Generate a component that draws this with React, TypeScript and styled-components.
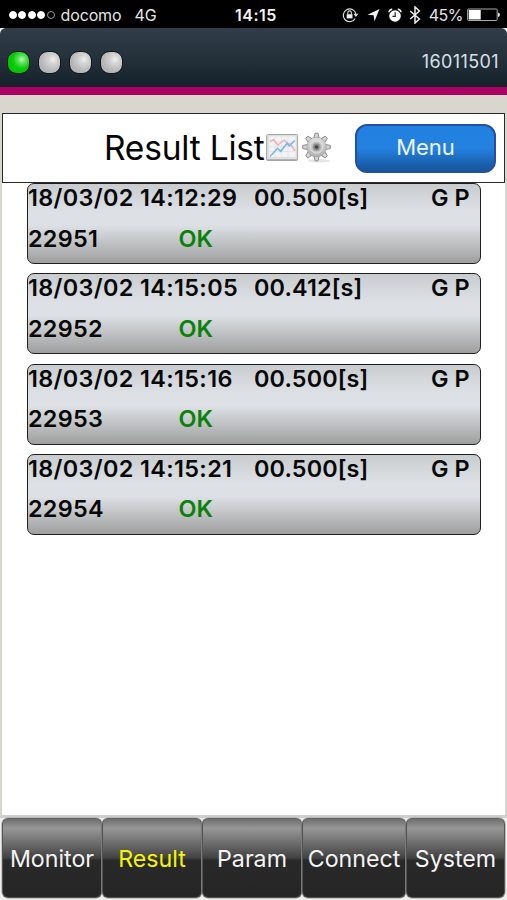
import React from 'react';
import styled, { createGlobalStyle } from 'styled-components';

const GlobalStyle = createGlobalStyle`
  * { box-sizing: border-box; }
  body { margin: 0; background: #d9d5cf; font-family: Inter, "Liberation Sans", sans-serif; }
`;

const Screen = styled.div`
  width: 507px;
  height: 900px;
  display: flex;
  flex-direction: column;
  overflow: hidden;
  background: #d9d6d0;
`;

const StatusBar = styled.header`
  height: 28px;
  flex: none;
  display: grid;
  grid-template-columns: 1fr auto 1fr;
  align-items: center;
  padding: 2px 7px 0 9px;
  background: #000;
  color: #e4e4e4;
  font-size: 16px;
  line-height: 26px;
`;

const StatusSide = styled.div<{ $end?: boolean }>`
  display: flex;
  align-items: center;
  justify-content: ${(p) => (p.$end ? 'flex-end' : 'flex-start')};
`;

const StatusText = styled.span<{ $ml?: number; $ls?: number }>`
  margin-left: ${(p) => p.$ml ?? 0}px;
  letter-spacing: ${(p) => p.$ls ?? 0}px;
`;

const Clock = styled.div`
  color: #f2f2f2;
  font-weight: 600;
  letter-spacing: 0.5px;
  padding-left: 3px;
`;

const Signal = styled.div`
  display: flex;
  gap: 1.4px;
`;

const SignalDot = styled.i<{ $on: boolean }>`
  width: 8px;
  height: 8px;
  border-radius: 50%;
  border: 1px solid ${(p) => (p.$on ? '#fff' : '#999')};
  background: ${(p) => (p.$on ? '#fff' : 'transparent')};
`;

const StatusIcon = styled.svg<{ $ml?: number }>`
  flex: none;
  margin-left: ${(p) => p.$ml ?? 0}px;
`;

const BannerShell = styled.div`
  flex: none;
  background: #f4f4f4;
`;

const Banner = styled.div`
  height: 59px;
  display: flex;
  align-items: center;
  justify-content: space-between;
  padding: 9px 8px 0 7px;
  border-radius: 6px 6px 0 0;
  background: linear-gradient(#303c47, #26323c 45%, #14202a);
`;

const Lamps = styled.div`
  display: flex;
  gap: 8px;
`;

const Lamp = styled.span<{ $on: boolean }>`
  width: 23px;
  height: 23px;
  border: 1.5px solid #10171c;
  border-radius: 9.5px;
  background: ${(p) =>
    p.$on
      ? 'radial-gradient(circle at 66% 36%, #b8f5b8 0, #55e055 22%, #08ca08 48%, #00c400 100%)'
      : 'radial-gradient(circle at 66% 36%, #efefef 0, #d2d2d2 25%, #b7b7b7 60%, #aaa 100%)'};
`;

const Serial = styled.span`
  color: #d5e0e8;
  font-size: 18px;
  letter-spacing: 0.4px;
  line-height: 20px;
  padding-bottom: 1px;
`;

const Accent = styled.div`
  height: 8px;
  flex: none;
  background: #ab0061;
`;

const Spacer = styled.div`
  height: 18px;
  flex: none;
`;

const Panel = styled.main`
  flex: 1;
  min-height: 0;
  margin: 0 2px;
  background: #fff;
`;

const TitleBar = styled.div`
  height: 70px;
  display: flex;
  align-items: center;
  border: 1.5px solid #292929;
  padding: 0 8px 0 101px;
`;

const Title = styled.h1`
  margin: 0;
  width: 161px;
  color: #050505;
  font-size: 33.5px;
  font-weight: 400;
  letter-spacing: -0.2px;
  white-space: nowrap;
`;

const MenuButton = styled.button`
  width: 141px;
  height: 49px;
  margin-left: auto;
  padding: 0 0 2px;
  border: 2px solid #2350a5;
  border-radius: 12px;
  background: linear-gradient(#2180e0, #2481e0 50%, #185da8 88%, #185696);
  color: #edf5fc;
  font: 400 22px Inter, sans-serif;
`;

const List = styled.ul`
  margin: 0;
  padding: 0 24px 0 25px;
  list-style: none;
  display: flex;
  flex-direction: column;
  gap: 9.3px;
`;

const Row = styled.li`
  height: 81px;
  border: 1.5px solid #1f1f1f;
  border-radius: 7px;
  display: grid;
  grid-template-rows: 40.5px 37.5px;
  background: linear-gradient(#c9cccf, #dde1e5 36%, #dde1e5 52%, #c3c5c7 72%, #9f9f9f);
  color: #080808;
  font-size: 23.4px;
  font-weight: 600;
`;

const Line = styled.div`
  display: grid;
  grid-template-columns: 226px 177px auto;
  line-height: 28px;
  white-space: nowrap;
`;

const ResultLine = styled(Line)`
  grid-template-columns: 150.5px auto;
`;

const Fit = styled.span<{ $ls?: number }>`
  letter-spacing: ${(p) => p.$ls ?? 0}px;
`;

const Verdict = styled.span`
  color: #0b810b;
`;

const TabBar = styled.nav`
  height: 85px;
  flex: none;
  display: grid;
  grid-template-columns: 100px 100px 100px 104px 99px;
  padding: 3px 2px 2px;
  background: linear-gradient(#cfcfcd 0 3px, #efefed 3px);
`;

const Tab = styled.button<{ $active: boolean }>`
  padding: 2px 0 0;
  border: 1.5px solid #555;
  border-top-color: #656565;
  border-radius: 6px;
  background: linear-gradient(#6f6f6f, #979797 12%, #666 34%, #414141 50%, #292929 53%, #252525);
  box-shadow: 0 0 0 0.5px #999;
  color: ${(p) => (p.$active ? '#f5f500' : '#f4f4f4')};
  font: 400 23.2px Inter, sans-serif;
  white-space: nowrap;
  display: flex;
  align-items: center;
  justify-content: center;
`;

const lamps = [true, false, false, false];
const signal = [true, true, true, true, false];

const results = [
  { id: '22951', at: '18/03/02 14:12:29', time: '00.500[s]' },
  { id: '22952', at: '18/03/02 14:15:05', time: '00.412[s]' },
  { id: '22953', at: '18/03/02 14:15:16', time: '00.500[s]' },
  { id: '22954', at: '18/03/02 14:15:21', time: '00.500[s]' },
];

const tabs = ['Monitor', 'Result', 'Param', 'Connect', 'System'];

const RotationLock = () => (
  <StatusIcon width="17" height="16" viewBox="0 0 17 16" fill="none" stroke="#ddd">
    <path d="M13.2 11.5A6.4 6.4 0 1 1 13.9 7" strokeWidth="1.2" />
    <path d="M11.4 6.8h5L13.9 10z" fill="#ddd" stroke="none" />
    <rect x="4.7" y="7.2" width="5.8" height="4.2" fill="#eee" stroke="none" />
    <path d="M5.8 7.2V5.7a1.8 1.8 0 0 1 3.6 0v1.5" strokeWidth="1.1" />
  </StatusIcon>
);

const LocationArrow = () => (
  <StatusIcon $ml={8} width="13" height="14" viewBox="0 0 13 14" fill="#eee">
    <path d="M12.5 1 7.5 13.2 6.6 7.3.5 6.7z" />
  </StatusIcon>
);

const Alarm = () => (
  <StatusIcon $ml={8} width="14" height="15" viewBox="0 0 14 15" fill="none">
    <circle cx="7" cy="8" r="5.8" fill="#fff" />
    <path d="M1 4.3A3 3 0 0 1 4.2 1.4M13 4.3A3 3 0 0 0 9.8 1.4" stroke="#eee" strokeWidth="1.6" />
    <path d="M7.2 4.3v4.1H4.5" stroke="#222" strokeWidth="1.2" />
  </StatusIcon>
);

const Bluetooth = () => (
  <StatusIcon $ml={7} width="12" height="18" viewBox="0 0 12 18" fill="none" stroke="#eee" strokeWidth="1.5">
    <path d="m1.2 5 9.2 8L6 17V1l4.4 4-9.2 8" />
  </StatusIcon>
);

const Battery = () => (
  <StatusIcon $ml={4} width="33" height="14" viewBox="0 0 33 14">
    <rect x=".6" y="1" width="29.6" height="11.5" rx="1" fill="none" stroke="#aaa" />
    <rect x="1.7" y="2" width="12" height="9.5" fill="#fff" />
    <path d="M31 4.6q2 .4 2 2.2t-2 2.2z" fill="#ddd" />
  </StatusIcon>
);

const ChartIcon = () => (
  <svg width="34" height="30" viewBox="0 0 34 30">
    <rect x="1.6" y="1.5" width="31" height="26" rx="1" fill="#dedede" stroke="#a6a6a6" />
    <rect x="4.1" y="3.5" width="26.5" height="20.5" fill="#f1f3f4" />
    <path d="M4 8.6h26M4 13.6h26M4 18.6h26M10 3.6V24M16.5 3.6V24M23 3.6V24" stroke="#d9dfe2" strokeWidth=".6" />
    <path d="m5 8.2 3.6-1.4L13 12l6.2-5 3.5 3.5 2.7.7 4.5 6.5" fill="none" stroke="#efb0b5" strokeWidth="1.6" />
    <path d="m5 23.5 7.5-8.2 3.3 3 6.3-8 2.2 2.5 5.5-5.3" fill="none" stroke="#7db5ea" strokeWidth="1.6" />
    <path d="M2 26.7h30" stroke="#aaa" />
  </svg>
);

const TOOTH = 'M-2.6-9-1.5-13.8h3l1.1 4.8z';

const GearIcon = () => (
  <svg width="36" height="32" viewBox="-2 0 36 32">
    <defs>
      <linearGradient id="steel" x2="0" y2="1">
        <stop stopColor="#dedede" />
        <stop offset="1" stopColor="#b2b2b2" />
      </linearGradient>
    </defs>
    <ellipse cx="18" cy="28.8" rx="11" ry="1.8" fill="#e5e5e5" />
    <g transform="translate(15.5 15)">
      <g fill="#d4d4d4" stroke="#858585" strokeWidth=".9">
        {[0, 45, 90, 135, 180, 225, 270, 315].map((a) => (
          <path key={a} d={TOOTH} transform={`rotate(${a})`} />
        ))}
      </g>
      <circle r="9.8" fill="url(#steel)" stroke="#9a9a9a" strokeWidth=".6" />
      <circle r="6.2" fill="#c6c6c6" stroke="#e3e3e3" />
      <circle r="3.7" fill="#858585" stroke="#a5a5a5" />
      <circle r="1.8" fill="#444" />
    </g>
  </svg>
);

export default function App() {
  return (
    <Screen>
      <GlobalStyle />
      <StatusBar>
        <StatusSide>
          <Signal>
            {signal.map((on, i) => (
              <SignalDot key={i} $on={on} />
            ))}
          </Signal>
          <StatusText $ml={6} $ls={-0.15}>docomo</StatusText>
          <StatusText $ml={13}>4G</StatusText>
        </StatusSide>
        <Clock>14:15</Clock>
        <StatusSide $end>
          <RotationLock />
          <LocationArrow />
          <Alarm />
          <Bluetooth />
          <StatusText $ml={8} $ls={-0.5}>45%</StatusText>
          <Battery />
        </StatusSide>
      </StatusBar>
      <BannerShell>
        <Banner>
          <Lamps>
            {lamps.map((on, i) => (
              <Lamp key={i} $on={on} />
            ))}
          </Lamps>
          <Serial>16011501</Serial>
        </Banner>
      </BannerShell>
      <Accent />
      <Spacer />
      <Panel>
        <TitleBar>
          <Title>Result List</Title>
          <ChartIcon />
          <GearIcon />
          <MenuButton>Menu</MenuButton>
        </TitleBar>
        <List>
          {results.map((r) => (
            <Row key={r.id}>
              <Line>
                <Fit $ls={0.36}>{r.at}</Fit>
                <Fit $ls={0.12}>{r.time}</Fit>
                <Fit>G P</Fit>
              </Line>
              <ResultLine>
                <Fit $ls={0.3}>{r.id}</Fit>
                <Verdict>OK</Verdict>
              </ResultLine>
            </Row>
          ))}
        </List>
      </Panel>
      <TabBar>
        {tabs.map((t) => (
          <Tab key={t} $active={t === 'Result'}>
            {t}
          </Tab>
        ))}
      </TabBar>
    </Screen>
  );
}
